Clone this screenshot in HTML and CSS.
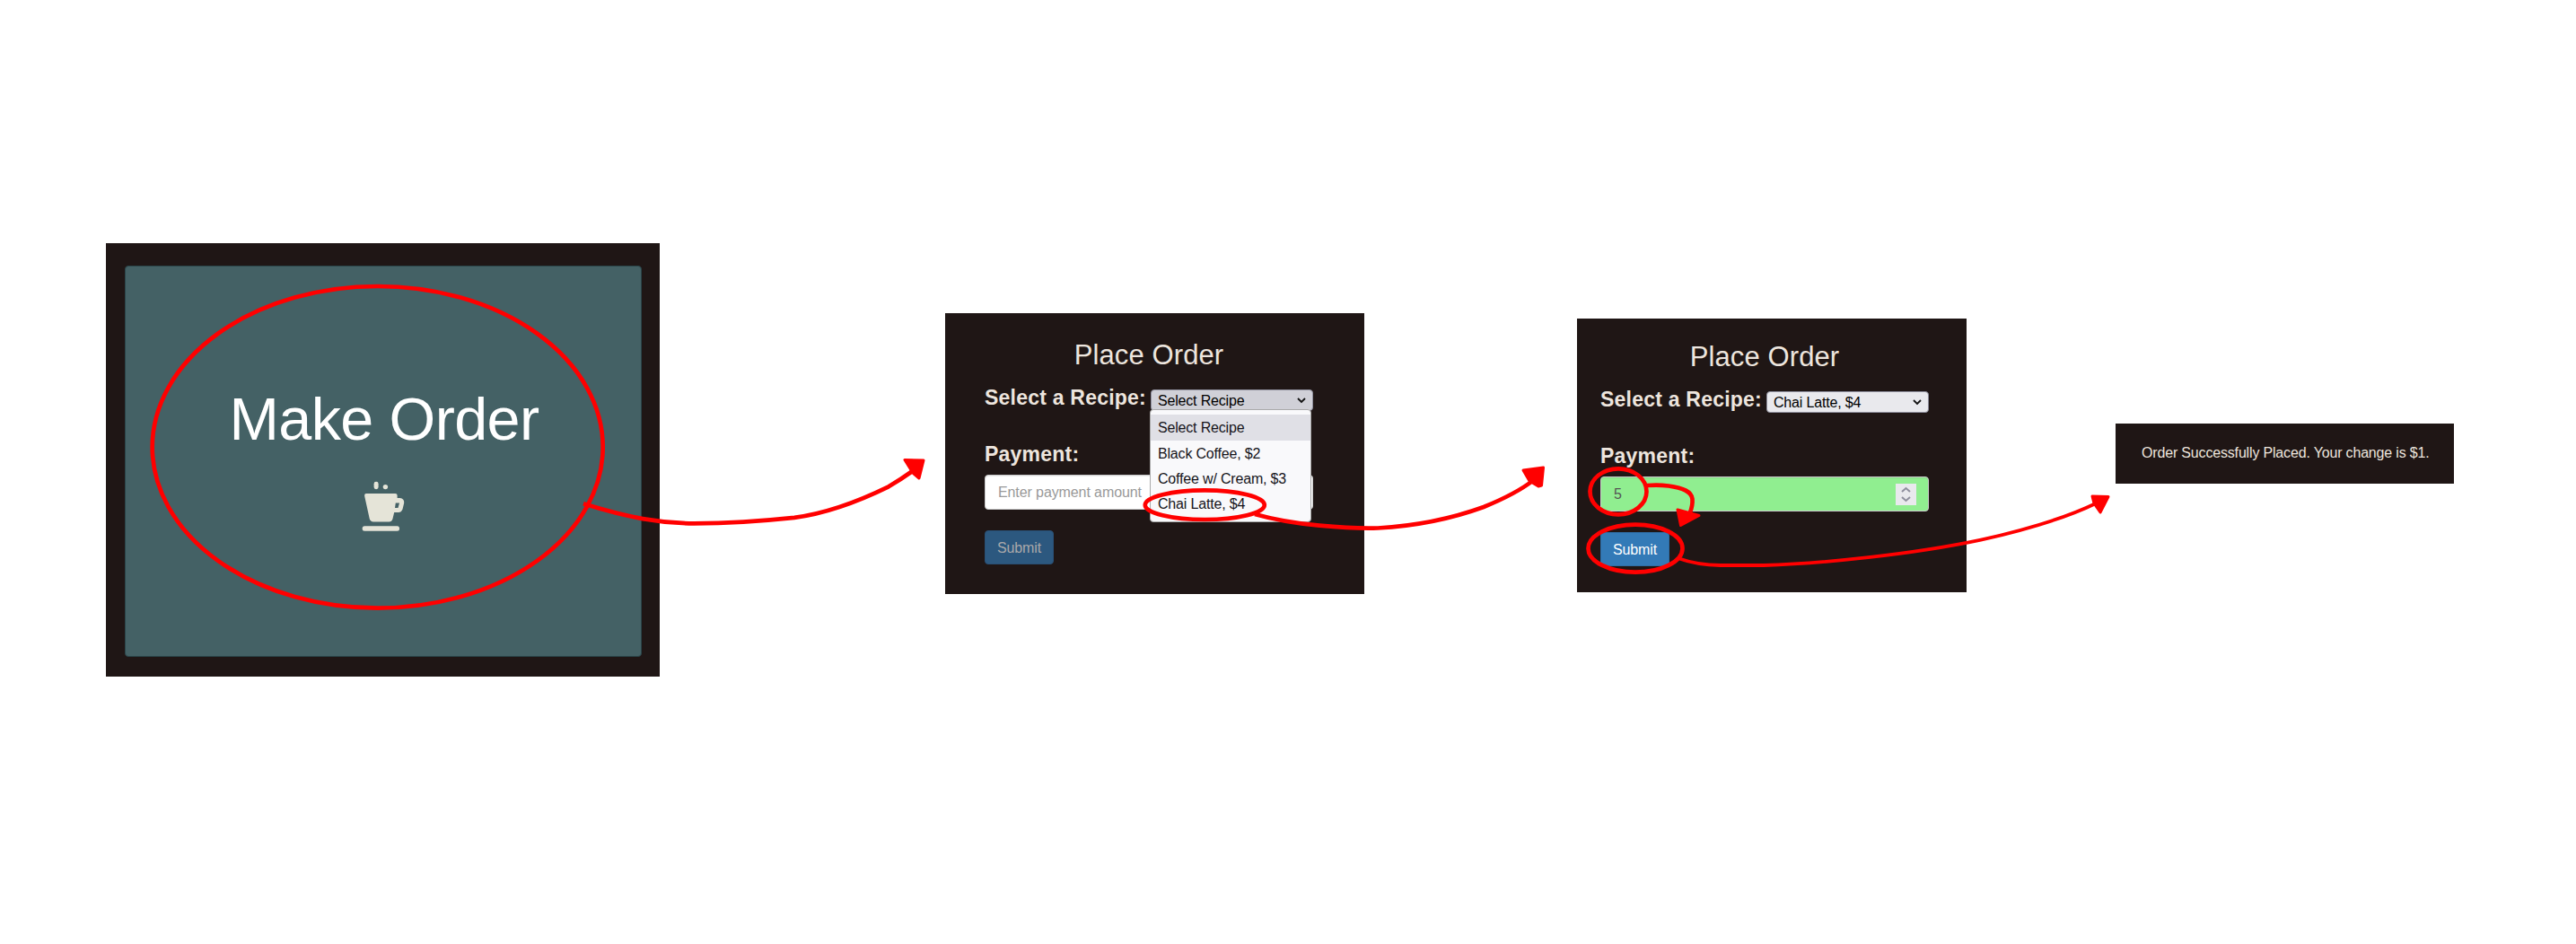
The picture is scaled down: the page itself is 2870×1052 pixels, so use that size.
FILE: index.html
```html
<!DOCTYPE html>
<html lang="en">
<head>
<meta charset="utf-8">
<title>Order flow</title>
<link rel="stylesheet" href="styles.css">
</head>
<body>
<main class="flow">
  <section class="panel panel-home">
    <div class="tile">
      <h1 class="tile-title">Make Order</h1>
      <svg class="cup" width="48" height="56" viewBox="0 0 48 56">
        <rect x="13.6" y="0.8" width="5" height="8.4" rx="2.4"/>
        <circle cx="26.4" cy="6.6" r="2.7"/>
        <path fill-rule="evenodd" d="M5 14H37.500Q39.600 14 39.600 16V19H42.500Q47.600 19.500 47.200 24.500L45.500 31.500Q44 35 41 35H36.200L34.400 42.500Q33.500 45.400 30.500 45.400H13Q9.600 45.400 8.700 42L3.200 17Q2.800 14 5 14ZM37.800 24.500L37 30H40.500L42 24.500Z"/>
        <rect x="0.700" y="50.300" width="41.300" height="5.400" rx="2.500"/>
      </svg>
    </div>
  </section>

  <section class="panel panel-form panel-open">
    <h2 class="form-title">Place Order</h2>
    <div class="field-row">
      <span class="label">Select a Recipe:</span>
      <div class="select active">
        <span>Select Recipe</span>
        <svg class="chevron" width="10" height="7" viewBox="0 0 10 7"><path d="M1 1L5 5L9 1"/></svg>
        <ul class="menu">
          <li class="selected">Select Recipe</li>
          <li>Black Coffee, $2</li>
          <li>Coffee w/ Cream, $3</li>
          <li>Chai Latte, $4</li>
        </ul>
      </div>
    </div>
    <div class="label payment">Payment:</div>
    <div class="input"><span class="placeholder">Enter payment amount</span></div>
    <button class="submit muted">Submit</button>
  </section>

  <section class="panel panel-form panel-filled">
    <h2 class="form-title">Place Order</h2>
    <div class="field-row">
      <span class="label">Select a Recipe:</span>
      <div class="select">
        <span>Chai Latte, $4</span>
        <svg class="chevron" width="10" height="7" viewBox="0 0 10 7"><path d="M1 1L5 5L9 1"/></svg>
      </div>
    </div>
    <div class="label payment">Payment:</div>
    <div class="input valid">
      <span>5</span>
      <svg class="spinner" width="23" height="24" viewBox="0 0 23 24"><path d="M7 9L11.500 5L16 9M7 15L11.500 19L16 15"/></svg>
    </div>
    <button class="submit">Submit</button>
  </section>

  <section class="panel panel-result">Order Successfully Placed. Your change is $1.</section>
</main>

<svg class="marks" width="2870" height="1052" viewBox="0 0 2870 1052">
  <g class="stroke">
    <ellipse cx="420.700" cy="498.300" rx="251" ry="179.300"/>
    <path d="M650 561.300C700 577 735 583 773 583.300C815 583 850 580.500 885 576.800C925 571.500 960 557 990 542.300Q1004 534 1018 524"/>
    <ellipse cx="1342.300" cy="562.700" rx="66.500" ry="16.300"/>
    <path d="M1398 573Q1430 582 1470 585.700T1535 588.500C1580 586 1620 577 1653 565C1675 556 1692 548 1708 535.500"/>
    <ellipse cx="1803" cy="547.800" rx="31.500" ry="25.500"/>
    <path d="M1835 541Q1848 540 1859 541.500C1876 544 1884.500 548 1885.500 556Q1886 563 1883 571"/>
    <ellipse cx="1822" cy="611.200" rx="52.500" ry="26.500"/>
    <path class="thin" d="M1871 622.500Q1890 629.500 1917 630H1965C2030 628 2130 618 2207 601.700C2250 592 2300 578 2335 561"/>
  </g>
  <g class="heads">
    <path d="M1008 512.500L1029 513L1024 533L1017 527Z"/>
    <path d="M1697 524L1719.500 521L1717.500 541L1714 542L1704 536Z"/>
    <path d="M1869 568L1893 574.500L1872.500 585.500Z"/>
    <path d="M2331 553L2349 553.500L2340 571L2333 561Z"/>
  </g>
</svg>
</body>
</html>
```
FILE: styles.css
```css
* { box-sizing: border-box; }

body {
  margin: 0;
  width: 2870px;
  height: 1052px;
  background: #fff;
  font: 16px/1.2 "Liberation Sans", Arial, sans-serif;
  overflow: hidden;
}

.flow {
  display: flex;
  align-items: flex-start;
  height: 1052px;
  padding-left: 118px;
}

.panel { background: #1f1615; color: #ede5de; flex: none; }

.panel-home {
  width: 617px;
  height: 483px;
  margin-top: 271px;
  padding: 25px 20px 22px 21px;
}

.tile {
  height: 436px;
  border: 1px solid #2a4549;
  border-radius: 4px;
  background: #446165;
  display: flex;
  flex-direction: column;
  align-items: center;
  padding-top: 133px;
}

.tile-title {
  margin: 0 0 31px;
  padding-left: 2px;
  font-size: 66.500px;
  line-height: 75px;
  letter-spacing: -0.600px;
  font-weight: 400;
  color: #fff;
}

.cup { fill: #e5e4d8; }

.panel-form { display: flex; flex-direction: column; align-items: flex-start; }

.panel-open {
  width: 467px;
  height: 313px;
  margin: 349px 0 0 318px;
  padding: 29px 0 0 44px;
}

.panel-filled {
  width: 434px;
  height: 305px;
  margin: 355px 0 0 237px;
  padding: 25px 0 0 26px;
}

.form-title {
  margin: 0 0 20px;
  width: 366px;
  text-align: center;
  font-size: 31px;
  line-height: 36px;
  font-weight: 400;
  letter-spacing: 0.100px;
}

.field-row { display: flex; align-items: flex-start; justify-content: space-between; width: 366px; height: 24px; }

.label { font-size: 23px; line-height: 24px; font-weight: 700; letter-spacing: 0.220px; white-space: nowrap; }
.field-row .label { line-height: 19px; }

.select {
  position: relative;
  display: flex;
  align-items: center;
  justify-content: space-between;
  width: 181px;
  height: 24px;
  padding: 1px 7px 0 7px;
  border: 1px solid #8f8f9d;
  border-radius: 4px;
  background: #e9e9ed;
  color: #000;
  letter-spacing: -0.180px;
}

.select.active { background: #d0d0d7; }

.chevron { fill: none; stroke: #111; stroke-width: 1.800; }

.menu {
  position: absolute;
  left: -2px;
  top: 21px;
  width: 180px;
  height: 126px;
  margin: 0;
  padding: 5px 0;
  list-style: none;
  border: 1px solid #aaa;
  border-radius: 4px;
  background: #f9f9fb;
  color: #15141a;
}

.menu li { height: 28px; line-height: 29px; padding-left: 8px; }
.menu .selected { height: 29px; background: #e0e0e6; }

.payment { margin: 36px 0 11px; }

.input {
  display: flex;
  align-items: center;
  justify-content: space-between;
  width: 366px;
  height: 39px;
  padding: 0 13px 0 14px;
  border: 1px solid #ccc;
  border-radius: 4px;
  background: #fff;
  color: #555;
  box-shadow: inset 0 1px 1px rgba(0, 0, 0, 0.075);
}

.placeholder { color: #999; letter-spacing: -0.100px; }
.input.valid { background: #90ee90; }

.spinner { background: #e9e9ed; fill: none; stroke: #8f8f9d; stroke-width: 2; }

.submit {
  width: 77px;
  height: 38px;
  margin-top: 23px;
  padding: 1px 0 0;
  border: 1px solid #2e6da4;
  border-radius: 4px;
  background: #337ab7;
  color: #fff;
  font: inherit;
  letter-spacing: -0.150px;
}

.submit.muted { background: #2c587f; border-color: #295075; color: #aaa9aa; }

.panel-result {
  width: 377px;
  height: 67px;
  margin: 472px 0 0 166px;
  padding-left: 29px;
  line-height: 65px;
  letter-spacing: -0.170px;
  white-space: nowrap;
}

/* Hand-drawn annotations over the panels */
.marks { position: absolute; left: 0; top: 0; }
.stroke { fill: none; stroke: #f00; stroke-width: 4.700; }
.thin { stroke-width: 3.800; }
.heads { fill: #f00; stroke: #f00; stroke-width: 3; stroke-linejoin: round; }
```
